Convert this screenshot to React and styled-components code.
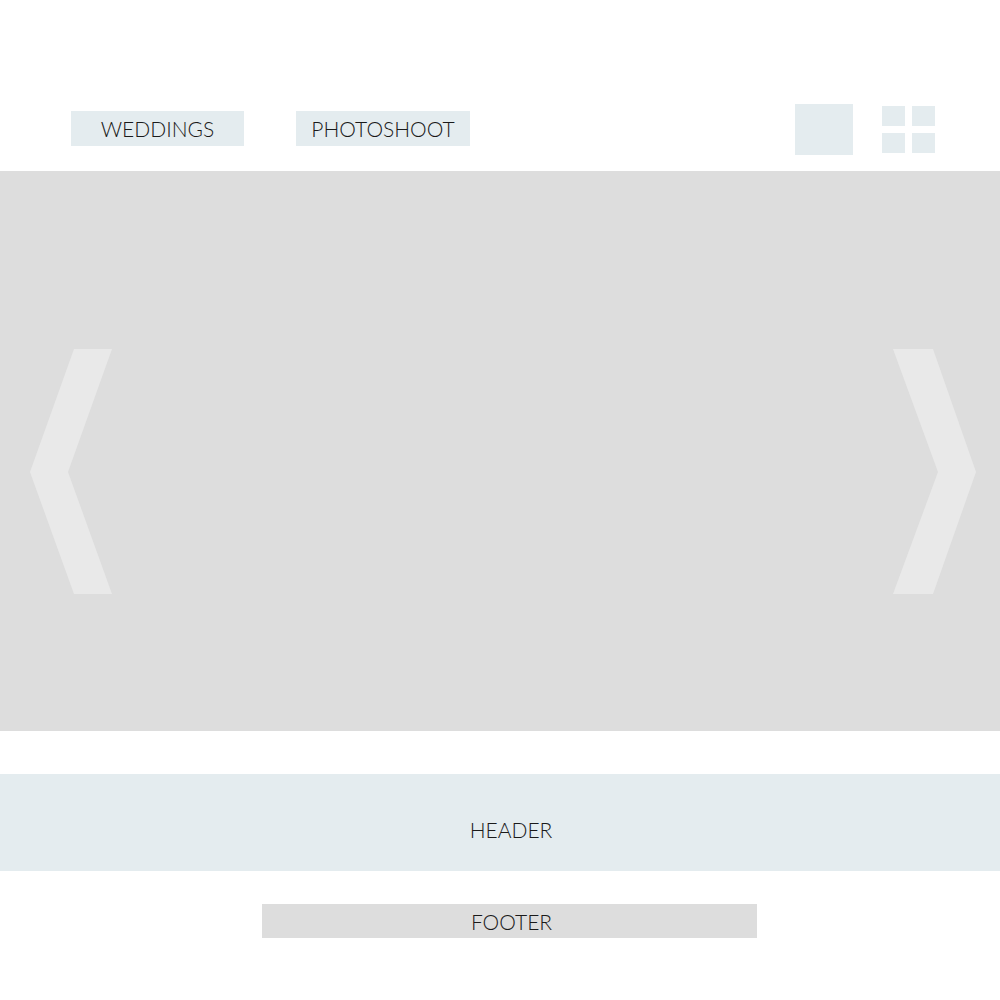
import React from 'react';
import styled, { createGlobalStyle } from 'styled-components';

const GlobalStyle = createGlobalStyle`
  body {
    margin: 0;
    background: #fff;
    font-family: Lato, "Open Sans", sans-serif;
    color: #1a1a1a;
  }
`;

const Nav = styled.nav`
  display: flex;
  align-items: flex-start;
  justify-content: space-between;
  height: 51px;
  padding: 104px 65px 16px 71px;
`;

const Tabs = styled.div`
  display: flex;
  gap: 52px;
  margin-top: 7px;
`;

const Tab = styled.button`
  width: ${(p) => p.$width}px;
  height: 35px;
  border: none;
  background: #e4ecef;
  font-family: Lato, sans-serif;
  font-weight: 300;
  font-size: 21px;
  color: #1a1a1a;
  padding: 0;
  cursor: pointer;
`;

const Views = styled.div`
  display: flex;
  align-items: center;
  gap: 29px;
`;

const SingleView = styled.div`
  width: 58px;
  height: 51px;
  background: #e4ecef;
`;

const GridView = styled.div`
  display: grid;
  grid-template-columns: 23px 23px;
  grid-template-rows: 20px 20px;
  column-gap: 7px;
  row-gap: 7px;
`;

const Cell = styled.div`
  background: #e4ecef;
`;

const Slider = styled.section`
  height: 560px;
  background: #dddddd;
  display: flex;
  justify-content: space-between;
  align-items: flex-start;
  padding: 178px 24px 0 30px;
  box-sizing: border-box;
`;

const Arrow = styled.svg`
  display: block;
  fill: #e9e9e9;
`;

const Header = styled.header`
  margin-top: 43px;
  height: 97px;
  box-sizing: border-box;
  padding: 14px 0 0 22px;
  background: #e4ecef;
  display: flex;
  align-items: center;
  justify-content: center;
  font-weight: 300;
  font-size: 21px;
`;

const FooterWrap = styled.div`
  display: flex;
  padding: 33px 0 0 262px;
`;

const Footer = styled.footer`
  width: 495px;
  height: 34px;
  background: #dddddd;
  display: flex;
  align-items: center;
  justify-content: center;
  padding-left: 4px;
  box-sizing: border-box;
  font-weight: 300;
  font-size: 21px;
`;

export default function App() {
  return (
    <>
      <GlobalStyle />
      <Nav>
        <Tabs>
          <Tab $width={173}>WEDDINGS</Tab>
          <Tab $width={174}>PHOTOSHOOT</Tab>
        </Tabs>
        <Views>
          <SingleView />
          <GridView>
            <Cell />
            <Cell />
            <Cell />
            <Cell />
          </GridView>
        </Views>
      </Nav>
      <Slider>
        <Arrow width="82" height="245" viewBox="0 0 82 245">
          <polygon points="44,0 82,0 38,123 82,245 44,245 0,123" />
        </Arrow>
        <Arrow width="83" height="245" viewBox="0 0 83 245">
          <polygon points="0,0 40,0 83,123 40,245 0,245 45,123" />
        </Arrow>
      </Slider>
      <Header>HEADER</Header>
      <FooterWrap>
        <Footer>FOOTER</Footer>
      </FooterWrap>
    </>
  );
}
